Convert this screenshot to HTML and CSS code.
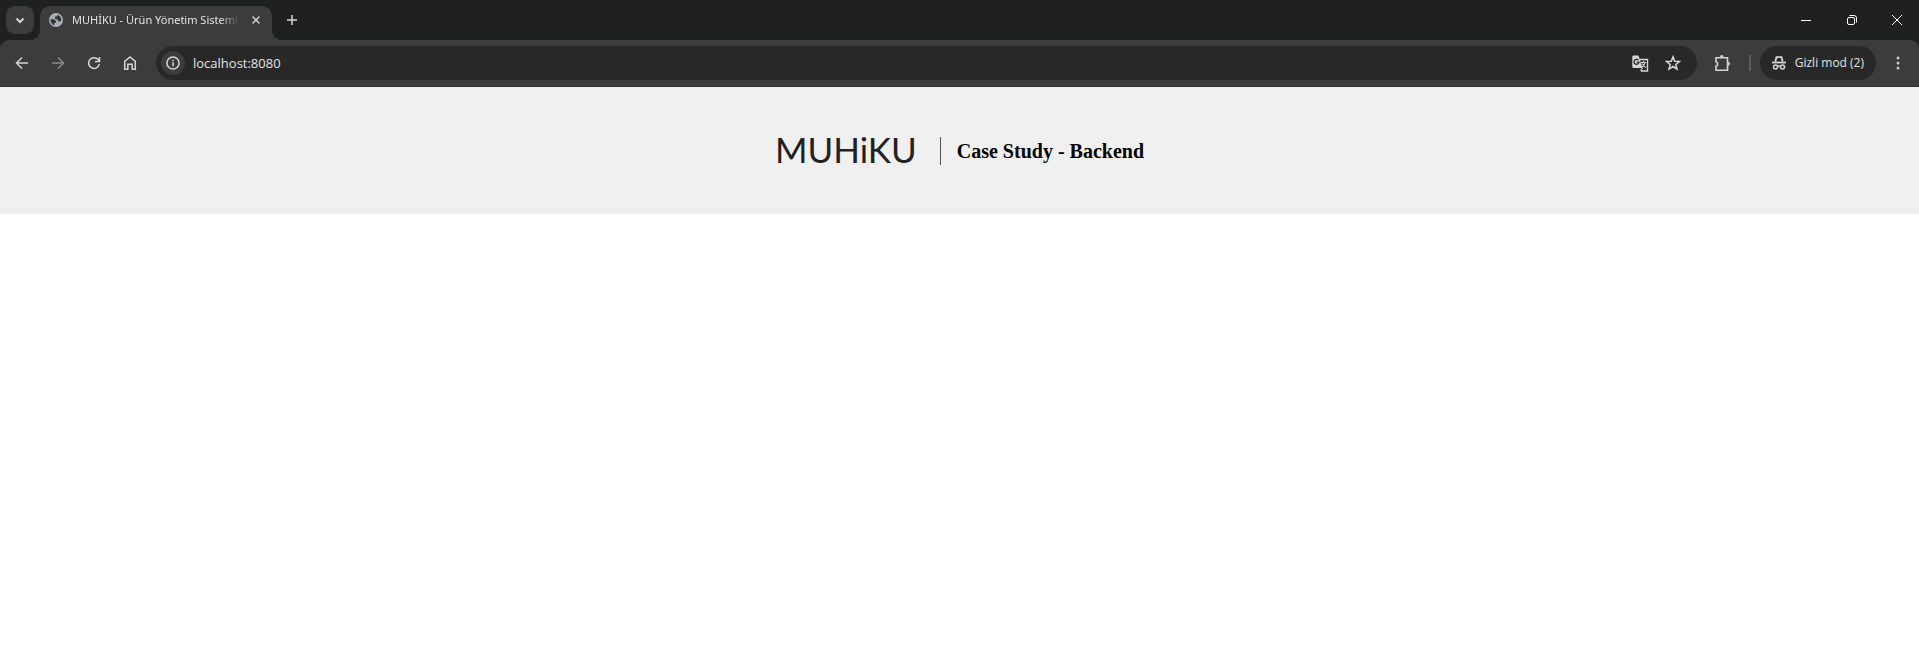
FILE: index.html
```html
<!DOCTYPE html>
<html lang="tr">
<head>
<meta charset="utf-8">
<title>MUHİKU - Ürün Yönetim Sistemi</title>
<link rel="stylesheet" href="styles.css">
</head>
<body>
<div class="browser">
  <div class="tab-strip">
    <button class="tab-search" aria-label="Sekmelerde ara"><svg width="14" height="14" viewBox="0 0 14 14"><path d="M3.500 5.500 7 9l3.500-3.500" stroke-width="2"/></svg></button>
    <div class="tab">
      <svg class="globe" width="14" height="14" viewBox="0 0 14 14"><circle cx="7" cy="7" r="7" fill="#a9adb5" stroke="none"/><path d="M1.500 6.300 5 6.300 7 8 7 9.600 5.300 10 5.300 12.300 C2.800 11.500 1.400 9.300 1.500 6.300Z M8.500 1.700 C10.600 2.300 12.200 4.200 12.300 6.700 L11.500 8.500 9 8.300 8.500 6.500 6 5.800 6 3.500 8.300 3.200Z" fill="#34363a" stroke="none"/></svg>
      <span class="tab-title">MUHİKU - Ürün Yönetim Sistemi</span>
      <button class="tab-close" aria-label="Sekmeyi kapat"><svg width="8" height="8" viewBox="0 0 8 8"><path d="m.5.5 7 7M7.500.5.5 7.500" stroke-width="1.400"/></svg></button>
    </div>
    <button class="new-tab" aria-label="Yeni sekme"><svg width="12" height="12" viewBox="0 0 12 12"><path d="M6 1v10M1 6h10" stroke-width="1.500"/></svg></button>
    <div class="window-controls">
      <button aria-label="Simge durumuna küçült"><svg width="12" height="12" viewBox="0 0 12 12"><path d="M1 6.500h10"/></svg></button>
      <button aria-label="Önceki boyut"><svg width="12" height="12" viewBox="0 0 12 12"><rect x="1.500" y="3.500" width="7" height="7" rx="1.500"/><path d="M3.500 1.500h4.500a2.500 2.500 0 0 1 2.500 2.500v4.500"/></svg></button>
      <button aria-label="Kapat"><svg width="12" height="12" viewBox="0 0 12 12"><path d="m1 1 10 10M11 1 1 11"/></svg></button>
    </div>
  </div>
  <div class="toolbar">
    <div class="nav">
      <button aria-label="Geri"><svg width="14" height="14" viewBox="0 0 14 14"><path d="M13 7H2M7 1.500 1.500 7 7 12.500"/></svg></button>
      <button class="dim" aria-label="İleri"><svg width="14" height="14" viewBox="0 0 14 14"><path d="M1 7h11M7 1.500 12.500 7 7 12.500"/></svg></button>
      <button aria-label="Yenile"><svg width="14" height="14" viewBox="0 0 14 14"><path d="M12.300 8.200A5.400 5.400 0 1 1 11.200 3.600L12.300 5M12.500 1v4.500H8"/></svg></button>
      <button aria-label="Ana sayfa"><svg width="14" height="14" viewBox="0 0 14 14"><path d="M1.700 5.300 7 1l5.300 4.300v7.900H9.200V8.200H4.800v5H1.700Z"/></svg></button>
    </div>
    <div class="address">
      <button class="site-info" aria-label="Site bilgileri"><svg width="14" height="14" viewBox="0 0 14 14"><circle cx="7" cy="7" r="6.100"/><path d="M7 6.200v4M7 3.700v1.500"/></svg></button>
      <input class="url" type="text" aria-label="Adres çubuğu" value="localhost:8080">
      <button aria-label="Bu sayfayı çevir"><svg width="17" height="17" viewBox="0 0 17 17"><path d="M6 4.500h9.500v11.500H9" stroke-width="1.400"/><path d="M1.500.5h5L10.500 13H1.500A1.200 1.200 0 0 1 .3 11.800V1.700A1.200 1.200 0 0 1 1.500.5Z" fill="#d4d6d6" stroke="none"/><path d="M6.300 5A2.500 2.500 0 1 0 7 7.200H4.800" stroke="#282828" stroke-width="1.300"/><path d="M9 7.500h5M11.500 6v1.500M13 7.700q-.8 3.200-3 4.400M10.200 8.700l3.500 4M8.500 16l2-3" stroke-width="1.100"/></svg></button>
      <button aria-label="Yer işareti ekle"><svg width="16" height="16" viewBox="0 0 16 16"><path d="m8 1.800 1.700 4.400 4.700.3-3.600 3 1.200 4.600L8 11.500l-4 2.600 1.200-4.600-3.600-3 4.700-.3Z" stroke-width="1.500"/></svg></button>
    </div>
    <button class="extensions" aria-label="Uzantılar"><svg width="17" height="17" viewBox="0 0 17 17"><path d="M2 2.800h11.500v12.400H2v-4a2.300 2.300 0 0 0 0-4.400Z" stroke-width="1.600"/><path d="M5.800 2a2 2 0 0 1 4 0v.8h-4ZM14 6.800a2 2 0 0 1 0 4Z" fill="#c7c9c9" stroke="none"/></svg></button>
    <span class="divider"></span>
    <button class="incognito"><svg width="14" height="14" viewBox="0 0 14 14"><path d="M3.300 5.500 4.500 1.200h5l1.200 4.300" stroke-width="1.800"/><path d="M0 6.500h14" stroke-width="1.800"/><circle cx="3.500" cy="11" r="2"/><circle cx="10.500" cy="11" r="2"/><path d="M5.500 10.500q1.500-1 3 0"/></svg><span>Gizli mod (2)</span></button>
    <button class="menu" aria-label="Menü"><svg width="4" height="16" viewBox="0 0 4 16"><g fill="#c7c9c9" stroke="none"><circle cx="2" cy="3" r="1.500"/><circle cx="2" cy="8" r="1.500"/><circle cx="2" cy="13" r="1.500"/></g></svg></button>
  </div>
</div>
<header class="hero">
  <div class="logo">MUHiKU</div>
  <h1 class="title">Case Study - Backend</h1>
</header>
</body>
</html>
```
FILE: styles.css
```css
* { box-sizing: border-box; }

body {
  margin: 0;
  background: #fff;
}

button {
  display: flex;
  align-items: center;
  justify-content: center;
  padding: 0;
  border: 0;
  background: none;
  color: #e3e3e3;
  font: inherit;
}

svg {
  display: block;
  flex: none;
  fill: none;
  stroke: #d4d6d6;
  stroke-width: 1.500;
}

.browser {
  background: #1f2120;
  color: #e3e3e3;
  font: 12px/16px "Open Sans", sans-serif;
}

.tab-strip {
  display: flex;
  height: 40px;
  padding: 6px 0 0 6px;
}

.tab-search {
  width: 28px;
  height: 28px;
  margin-right: 6px;
  border-radius: 9px;
  background: #3c3c3c;
}

.tab {
  position: relative;
  display: flex;
  align-items: center;
  width: 232px;
  padding: 0 8px 6px 9px;
  border-radius: 10px 10px 0 0;
  background: #3c3c3c;
}

.tab::before,
.tab::after {
  content: "";
  position: absolute;
  bottom: 0;
  width: 10px;
  height: 10px;
}

.tab::before {
  right: 100%;
  background: radial-gradient(circle at 0 0, transparent 10px, #3c3c3c 10px);
}

.tab::after {
  left: 100%;
  background: radial-gradient(circle at 100% 0, transparent 10px, #3c3c3c 10px);
}

.tab-title {
  flex: 1;
  min-width: 0;
  margin: 0 8px 0 9px;
  overflow: hidden;
  white-space: nowrap;
  font-family: "Noto Sans", sans-serif;
  font-size: 11px;
  mask-image: linear-gradient(to right, #000 88%, transparent);
}

.tab-close {
  width: 16px;
  height: 16px;
}

.new-tab {
  width: 28px;
  height: 28px;
  margin-left: 6px;
}

.window-controls {
  display: flex;
  height: 28px;
  margin-left: auto;
}

.window-controls button { width: 46px; }

.window-controls button:last-child { width: 44px; }

.window-controls svg {
  stroke: #fff;
  stroke-width: 1;
}

.toolbar {
  display: flex;
  align-items: center;
  height: 47px;
  padding: 0 7px 0 4px;
  border-bottom: 1px solid #2b2d2d;
  border-radius: 9px 9px 0 0;
  background: #3c3c3c;
}

.nav { display: flex; }

.nav button {
  width: 36px;
  height: 28px;
}

.nav .dim { opacity: 0.5; }

.address {
  display: flex;
  flex: 1;
  align-items: center;
  height: 34px;
  margin: 0 12px 0 8px;
  padding: 0 8px 0 5px;
  border-radius: 17px;
  background: #282828;
}

.address button {
  width: 32px;
  height: 24px;
}

.address .site-info {
  width: 24px;
  border-radius: 12px;
  background: #3c3c3c;
}

.url {
  flex: 1;
  min-width: 0;
  margin-left: 8px;
  padding: 0;
  border: 0;
  outline: 0;
  background: none;
  color: #e3e3e3;
  font: 13px/20px "Open Sans", sans-serif;
}

.extensions {
  width: 28px;
  height: 28px;
}

.divider {
  width: 2px;
  height: 16px;
  margin: 0 9px 0 12px;
  background: #5c5e5e;
}

.incognito {
  gap: 9px;
  height: 34px;
  padding: 0 12px;
  border-radius: 17px;
  background: #282828;
  white-space: nowrap;
}

.menu {
  width: 28px;
  height: 28px;
  margin-left: 8px;
}

.hero {
  display: flex;
  align-items: flex-start;
  justify-content: center;
  padding: 50px 0 49px;
  background: #f0f0f0;
}

.logo {
  padding: 0 23px 4px 0;
  border-right: 1px solid #555;
  color: #231f20;
  font: 35px/24px Lato, sans-serif;
}

.title {
  margin: 0 0 0 16px;
  color: #000;
  font: bold 20px/28px "Liberation Serif", serif;
}
```
